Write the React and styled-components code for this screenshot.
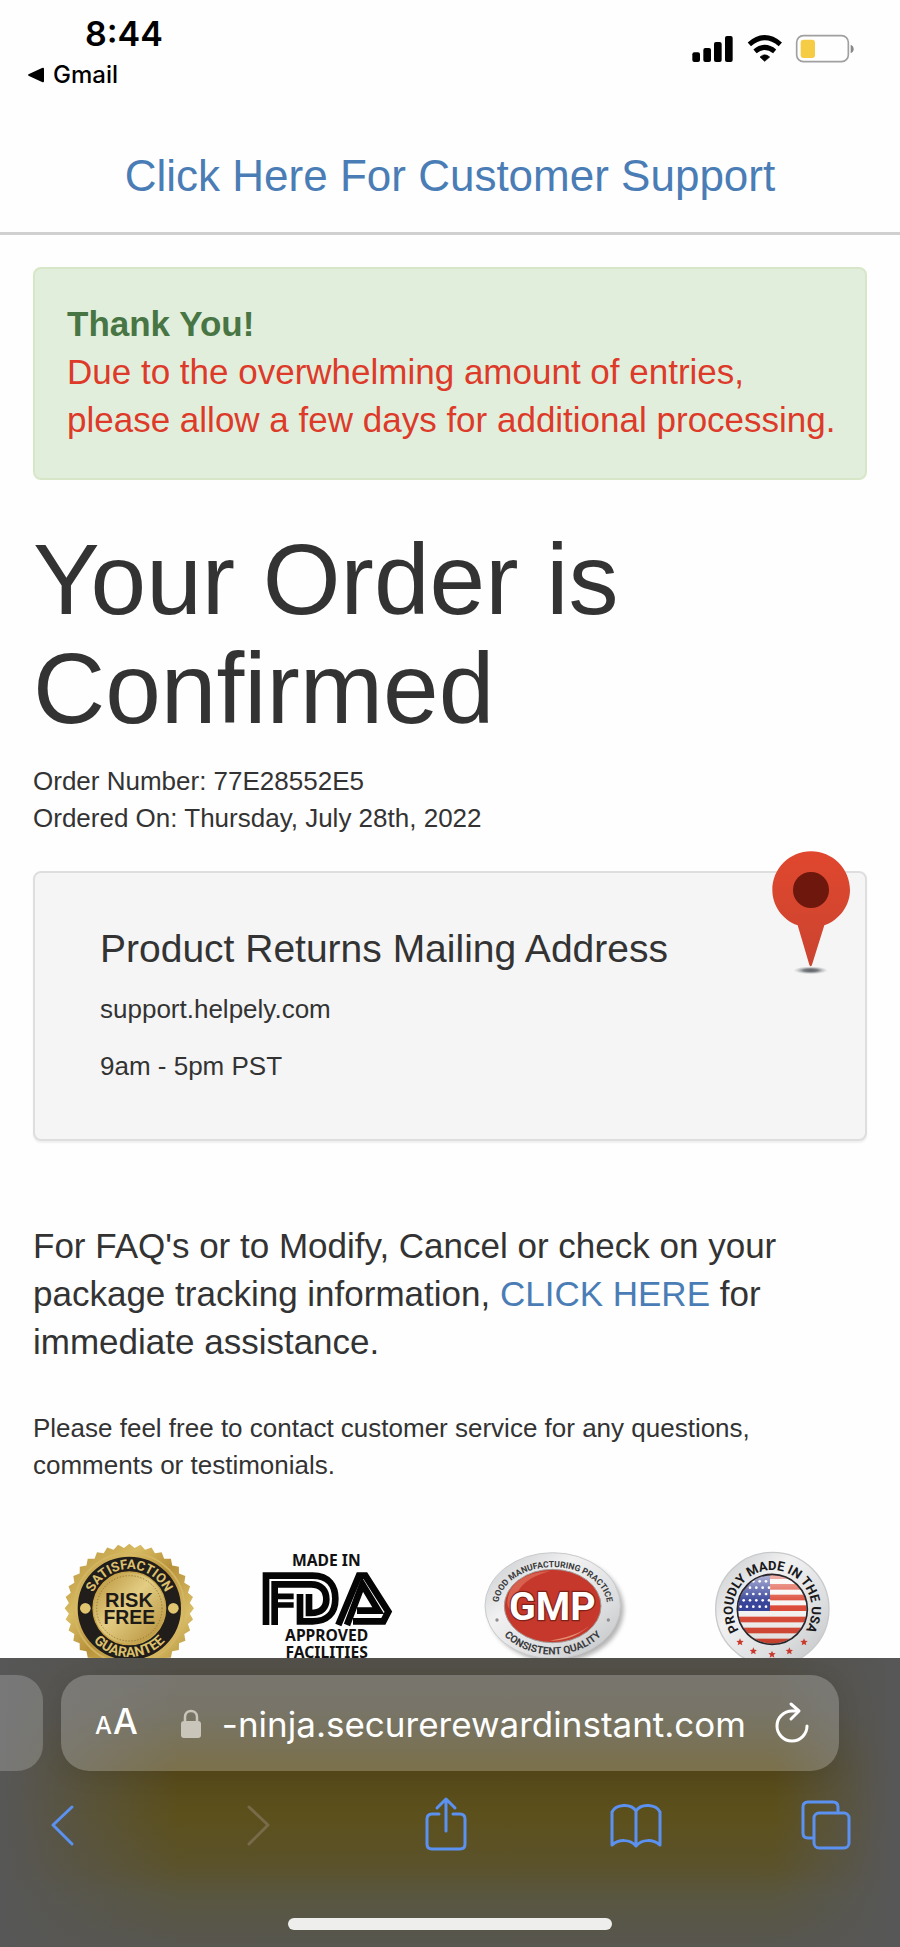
import React from "react";
import styled, { createGlobalStyle } from "styled-components";

const GlobalStyle = createGlobalStyle`
  *, *::before, *::after { box-sizing: border-box; }
  body {
    margin: 0;
    background: #fefefe;
    color: #333;
    font-family: "Liberation Sans", Arial, Helvetica, sans-serif;
    font-size: 26px;
    line-height: 37px;
  }
  h1, h2, p { margin: 0; font-weight: 400; }
  svg { display: block; overflow: visible; }
`;

const system = `Inter, "Helvetica Neue", sans-serif`;

/* ---------- status bar ---------- */

const StatusBar = styled.header`
  display: flex;
  justify-content: space-between;
  align-items: flex-start;
  height: 120px;
  padding: 14px 46px 0 28px;
  color: #000;
  font-family: ${system};
`;

const Clock = styled.time`
  display: block;
  padding-left: 57px;
  font-size: 34px;
  font-weight: 600;
  line-height: 40px;
`;

const BackToApp = styled.a`
  display: flex;
  align-items: center;
  gap: 9px;
  padding-top: 6px;
  color: inherit;
  font-size: 24px;
  font-weight: 500;
  line-height: 30px;
  text-decoration: none;
`;

const StatusIcons = styled.div`
  display: flex;
  gap: 14px;
  padding-top: 21px;
`;

/* ---------- page ---------- */

const SupportBar = styled.nav`
  display: flex;
  justify-content: center;
  height: 115px;
  padding-top: 30px;
  border-bottom: 3px solid #d0d0d0;
  font-size: 44px;
  line-height: 52px;
`;

const Link = styled.a`
  color: #4a7db5;
  text-decoration: none;
`;

const Page = styled.main`
  padding: 32px 33px 289px;
`;

const Alert = styled.section`
  padding: 31px 24px 34px 32px;
  border: 2px solid #d8e6c8;
  border-radius: 8px;
  background: #e1eedb;
  color: #dd3a2a;
  font-size: 35px;
  line-height: 48px;
`;

const AlertTitle = styled.strong`
  display: block;
  color: #487544;
`;

const Title = styled.h1`
  max-width: 700px;
  padding-top: 45px;
  font-size: 100px;
  line-height: 109px;
`;

const OrderFacts = styled.div`
  padding-top: 20px;
`;

const AddressCard = styled.section`
  position: relative;
  display: grid;
  gap: 20px;
  margin-top: 34px;
  padding: 54px 65px;
  border: 2px solid #dedede;
  border-radius: 8px;
  background: #f5f5f5;
  box-shadow: 0 2px 2px rgba(0, 0, 0, 0.06);
`;

const CardTitle = styled.h2`
  font-size: 39px;
  line-height: 44px;
`;

const Pin = styled.svg`
  position: absolute;
  top: -23px;
  right: 14px;
  width: 80px;
  height: 125px;
`;

const Faq = styled.p`
  padding-top: 81px;
  font-size: 35px;
  line-height: 48px;
`;

const Contact = styled.p`
  padding-top: 44px;
`;

const Badges = styled.div`
  display: flex;
  justify-content: space-between;
  padding: 59px 37px 0 31px;
`;

const SvgText = styled.text`
  font-family: ${(p) => p.$family || `Roboto, "Liberation Sans", sans-serif`};
  font-weight: 700;
  text-anchor: middle;
`;

/* ---------- browser controls ---------- */

const BrowserBar = styled.footer`
  position: fixed;
  right: 0;
  bottom: 0;
  left: 0;
  overflow: hidden;
  padding-top: 17px;
  background:
    linear-gradient(to right, #575757 0%, rgba(87, 87, 87, 0) 20%, rgba(87, 87, 87, 0) 86%, #575757 99%),
    linear-gradient(#52504a 0%, #524e3e 18%, #56491a 38%, #5c501c 55%, #5b522b 72%, #59563f 82%, #575650 100%);
`;

const TabStrip = styled.div`
  display: flex;
  gap: 18px;
  padding-right: 61px;
`;

const PreviousTab = styled.button`
  width: 43px;
  height: 96px;
  border: 0;
  border-radius: 0 26px 26px 0;
  background: rgba(255, 255, 255, 0.2);
`;

const AddressField = styled.div`
  display: flex;
  flex: 1;
  align-items: center;
  min-width: 0;
  height: 96px;
  padding: 0 30px 0 34px;
  border-radius: 28px;
  background: rgba(255, 255, 255, 0.22);
  box-shadow: 0 4px 24px rgba(0, 0, 0, 0.08);
  color: #fff;
`;

const IconButton = styled.button`
  display: flex;
  align-items: ${(p) => (p.$baseline ? "baseline" : "center")};
  gap: 1px;
  padding: 0;
  border: 0;
  background: none;
  color: ${(p) => p.$color || "#fff"};
  font-family: ${system};
  font-size: 35px;
  font-weight: 500;
  line-height: 52px;
`;

const SmallA = styled.span`
  font-size: 24px;
`;

const Url = styled.input`
  flex: 1;
  min-width: 0;
  height: 50px;
  margin-left: 16px;
  padding: 2px 0 0 5px;
  border: 0;
  background: none;
  color: #fff;
  font-family: ${system};
  font-size: 35px;
  line-height: 48px;
`;

const Lock = styled.svg`
  width: 20px;
  height: 29px;
  margin-left: 43px;
`;

const Toolbar = styled.nav`
  display: flex;
  justify-content: space-between;
  padding: 24px 50px 65px 38px;
`;

const HomeIndicator = styled.div`
  width: 36%;
  height: 12px;
  margin: 0 auto 17px;
  border-radius: 6px;
  background: #eeeeec;
`;

function ToolIcon({ children }) {
  return (
    <svg width="50" height="58" viewBox="0 0 50 58" fill="none" stroke="currentColor"
      strokeWidth="3" strokeLinecap="round" strokeLinejoin="round" aria-hidden="true">
      {children}
    </svg>
  );
}

/* ---------- badges ---------- */

function toothedEdge(cx, cy, outer, inner, teeth) {
  const points = [];
  for (let i = 0; i < teeth * 2; i += 1) {
    const angle = (Math.PI * i) / teeth;
    const r = i % 2 ? inner : outer;
    points.push(`${(cx + r * Math.cos(angle)).toFixed(1)},${(cy + r * Math.sin(angle)).toFixed(1)}`);
  }
  return points.join(" ");
}

function RiskFreeSeal() {
  return (
    <svg width="130" height="132" viewBox="192 69 390 396">
      <defs>
        <linearGradient id="gold" x1="0" y1="0" x2="1" y2="1">
          <stop offset="0" stopColor="#b18c35" />
          <stop offset="0.3" stopColor="#d8bb62" />
          <stop offset="0.5" stopColor="#b8923b" />
          <stop offset="0.75" stopColor="#d9bd66" />
          <stop offset="1" stopColor="#a57f2b" />
        </linearGradient>
        <linearGradient id="goldCore" x1="0" y1="0" x2="1" y2="1">
          <stop offset="0" stopColor="#b48d35" />
          <stop offset="0.45" stopColor="#e3cd83" />
          <stop offset="1" stopColor="#b08933" />
        </linearGradient>
        <path id="sealTop" d="M270 265 A118 118 0 0 1 506 265" />
        <path id="sealBottom" d="M242 265 A146 146 0 0 0 534 265" />
      </defs>
      <polygon points={toothedEdge(388, 265, 194, 182, 36)} fill="url(#gold)" />
      <circle cx="388" cy="265" r="166" fill="none" stroke="#d3b664" strokeWidth="5" />
      <circle cx="388" cy="265" r="132" fill="none" stroke="#211d1b" strokeWidth="46" />
      <circle cx="388" cy="265" r="109" fill="url(#goldCore)" stroke="#c7a44a" strokeWidth="4" />
      <circle cx="388" cy="265" r="98" fill="none" stroke="#8d6c25" strokeWidth="3" strokeDasharray="3 6" />
      <circle cx="256" cy="265" r="16" fill="#e0c470" />
      <circle cx="520" cy="265" r="16" fill="#e0c470" />
      <SvgText fontSize="40" fill="#dcc06c">
        <textPath href="#sealTop" startOffset="50%">SATISFACTION</textPath>
      </SvgText>
      <SvgText fontSize="42" fill="#dcc06c">
        <textPath href="#sealBottom" startOffset="50%">GUARANTEE</textPath>
      </SvgText>
      <SvgText $family={`"Liberation Sans", sans-serif`} x="387" y="261" fontSize="60" fill="#1d1a18">RISK</SvgText>
      <SvgText $family={`"Liberation Sans", sans-serif`} x="388" y="312" fontSize="58" fill="#1d1a18">FREE</SvgText>
    </svg>
  );
}

function FdaBadge() {
  return (
    <svg width="155" height="132" viewBox="783 69 465 396">
      <SvgText $family={`"Noto Sans", sans-serif`} x="976" y="139" fontSize="47" fill="#111">MADE IN</SvgText>
      <g fill="none" stroke="#050505" strokeWidth="20" strokeLinejoin="miter" aria-label="FDA" role="img">
        <path d="M795 315 V167 H935 C985 167 1003 200 1003 236 C1003 280 978 304 935 304 H897 V222" />
        <path d="M821 315 V193 H930 C961 193 976 212 976 238 C976 264 961 279 930 279 H924 V222" />
        <path d="M821 229 H878 M821 255 H878" strokeWidth="17" />
        <path d="M1012 315 L1074 167 H1093 L1162 275 L1147 304 H1056" />
        <path d="M1038 315 L1084 193 L1132 272 H1068" />
      </g>
      <SvgText $family={`"Noto Sans", sans-serif`} x="977" y="362" fontSize="47" fill="#111">APPROVED</SvgText>
      <SvgText $family={`"Noto Sans", sans-serif`} x="977" y="413" fontSize="47" fill="#111">FACILITIES</SvgText>
    </svg>
  );
}

function GmpBadge() {
  return (
    <svg width="162" height="132" viewBox="102 69 486 396">
      <defs>
        <linearGradient id="silver" x1="0" y1="0" x2="1" y2="1">
          <stop offset="0" stopColor="#c4c6c8" />
          <stop offset="0.35" stopColor="#f1f1f2" />
          <stop offset="0.7" stopColor="#dcdddf" />
          <stop offset="1" stopColor="#bfc1c3" />
        </linearGradient>
        <filter id="softShadow" x="-20%" y="-20%" width="140%" height="140%">
          <feGaussianBlur stdDeviation="7" />
        </filter>
        <path id="gmpTopArc" d="M150 286 A163 116 0 1 1 466 286" />
        <path id="gmpBottomArc" d="M134 305 A184 146 0 0 0 482 305" />
      </defs>
      <ellipse cx="318" cy="268" rx="203" ry="158" fill="#777" opacity="0.55" filter="url(#softShadow)" />
      <ellipse cx="308" cy="257" rx="203" ry="159" fill="url(#silver)" stroke="#c9cacc" strokeWidth="3" />
      <ellipse cx="308" cy="258" rx="145" ry="110" fill="#c5382b" stroke="#a39b98" strokeWidth="3" />
      <path d="M172 250 C172 190 230 156 300 154 C230 172 192 205 190 270 C184 275 174 268 172 250" fill="#e57b68" opacity="0.6" />
      <path d="M300 362 C370 364 430 320 443 280 C425 330 370 350 300 362" fill="#efb08e" opacity="0.7" />
      <SvgText fontSize="26" fill="#3b3b3d">
        <textPath href="#gmpTopArc" startOffset="50%">GOOD MANUFACTURING PRACTICE</textPath>
      </SvgText>
      <SvgText fontSize="31" fill="#3b3b3d">
        <textPath href="#gmpBottomArc" startOffset="50%">CONSISTENT QUALITY</textPath>
      </SvgText>
      <circle cx="141" cy="300" r="5" fill="#8c8c8e" />
      <circle cx="475" cy="300" r="5" fill="#8c8c8e" />
      <SvgText x="307" y="301" fontSize="118" fill="#fff" stroke="#7d2119" strokeWidth="7" paintOrder="stroke">GMP</SvgText>
    </svg>
  );
}

function UsaBadge() {
  const stars = [];
  for (let row = 0; row < 5; row += 1) {
    for (let col = 0; col < 5; col += 1) {
      stars.push(
        <circle key={`${row}-${col}`} cx={872 + col * 19 + (row % 2) * 9} cy={184 + row * 19} r="4" fill="#fff" />
      );
    }
  }
  const star = "0,-11 3,-4 11,-3 5,2 7,10 0,6 -7,10 -5,2 -11,-3 -3,-4";
  const ringStars = [[870, 366], [910, 393], [966, 403], [1018, 393], [1062, 366]];
  return (
    <svg width="116" height="132" viewBox="792 69 348 396">
      <defs>
        <clipPath id="flagClip"><circle cx="967" cy="268" r="103" /></clipPath>
        <linearGradient id="flagGloss" x1="0" y1="0" x2="0" y2="1">
          <stop offset="0" stopColor="#fff" stopOpacity="0.65" />
          <stop offset="0.4" stopColor="#fff" stopOpacity="0.05" />
          <stop offset="1" stopColor="#000" stopOpacity="0.12" />
        </linearGradient>
        <path id="usaArc" d="M883 351 A118 118 0 1 1 1051 351" />
      </defs>
      <circle cx="967" cy="267" r="170" fill="url(#silver)" stroke="#c8c9cb" strokeWidth="4" />
      <g clipPath="url(#flagClip)">
        <rect x="860" y="160" width="214" height="216" fill="#f7f5f3" />
        {[160, 192, 224, 256, 290, 323, 356].map((y) => (
          <rect key={y} x="860" y={y} width="214" height="17" fill="#db4430" />
        ))}
        <rect x="860" y="160" width="100" height="113" fill="#2d3a94" />
        {stars}
        <rect x="860" y="160" width="214" height="216" fill="url(#flagGloss)" />
      </g>
      <circle cx="967" cy="268" r="105" fill="none" stroke="#26262b" strokeWidth="5" />
      <SvgText fontSize="39" fill="#18181a">
        <textPath href="#usaArc" startOffset="50%">PROUDLY MADE IN THE USA</textPath>
      </SvgText>
      {ringStars.map(([x, y]) => (
        <polygon key={x} points={star} transform={`translate(${x} ${y})`} fill="#c93a2e" />
      ))}
    </svg>
  );
}

export default function App() {
  return (
    <>
      <GlobalStyle />
      <StatusBar>
        <div>
          <Clock>8:44</Clock>
          <BackToApp href="#gmail">
            <svg width="16" height="16" viewBox="0 0 16 16" aria-hidden="true">
              <path d="M1 7 L14 1 Q16 0 16 2 V14 Q16 16 14 15 L1 9 Q-1 8 1 7" />
            </svg>
            Gmail
          </BackToApp>
        </div>
        <StatusIcons aria-hidden="true">
          <svg width="41" height="28" viewBox="729 105 123 84">
            <rect x="730" y="157" width="23" height="29" rx="6" />
            <rect x="763" y="144" width="23" height="42" rx="6" />
            <rect x="795" y="126" width="23" height="60" rx="6" />
            <rect x="828" y="108" width="23" height="78" rx="6" />
          </svg>
          <svg width="35" height="28" viewBox="891 105 105 84">
            <path d="M944 184 L930 171 Q944 158 959 171 Z" stroke="#000" strokeWidth="2" strokeLinejoin="round" />
            <g fill="none" stroke="#000" strokeWidth="15">
              <path d="M898 133 Q944 93 991 133" />
              <path d="M915 154 Q944 130 974 154" />
            </g>
          </svg>
          <svg width="58" height="28" viewBox="1038 105 174 84">
            <rect x="1040" y="107" width="155" height="78" rx="20" fill="none" stroke="#a0a0a0" strokeWidth="5" />
            <rect x="1052" y="119" width="43" height="55" rx="9" fill="#f6cc44" />
            <path d="M1202 134 Q1211 138 1211 147 Q1211 156 1202 160 Z" fill="#888" />
          </svg>
        </StatusIcons>
      </StatusBar>

      <SupportBar>
        <Link href="#support">Click Here For Customer Support</Link>
      </SupportBar>

      <Page>
        <Alert role="status">
          <AlertTitle>Thank You!</AlertTitle>
          Due to the overwhelming amount of entries, please allow a few days for additional processing.
        </Alert>

        <Title>Your Order is Confirmed</Title>
        <OrderFacts>
          <p>Order Number: 77E28552E5</p>
          <p>Ordered On: Thursday, July 28th, 2022</p>
        </OrderFacts>

        <AddressCard>
          <CardTitle>Product Returns Mailing Address</CardTitle>
          <p>support.helpely.com</p>
          <p>9am - 5pm PST</p>
          <Pin viewBox="212 92 240 375" aria-hidden="true">
            <defs>
              <radialGradient id="pinShadow">
                <stop offset="0" stopColor="#5e6266" />
                <stop offset="0.4" stopColor="#7a7e82" />
                <stop offset="1" stopColor="#b8bbbd" stopOpacity="0" />
              </radialGradient>
              <linearGradient id="pinRed" x1="0" y1="0" x2="0" y2="1">
                <stop offset="0" stopColor="#e0472e" />
                <stop offset="1" stopColor="#cb4430" />
              </linearGradient>
            </defs>
            <ellipse cx="331" cy="453" rx="52" ry="12" fill="url(#pinShadow)" />
            <path d="M332 96 C396 96 449 148 449 212 C449 258 418 302 372 318 L335 436 Q331 446 327 436 L292 318 C246 302 216 258 216 212 C216 148 268 96 332 96 Z" fill="url(#pinRed)" />
            <circle cx="332" cy="212" r="54" fill="#6d170d" />
          </Pin>
        </AddressCard>

        <Faq>
          For FAQ's or to Modify, Cancel or check on your package tracking information,{" "}
          <Link href="#faq">CLICK HERE</Link> for immediate assistance.
        </Faq>
        <Contact>
          Please feel free to contact customer service for any questions, comments or testimonials.
        </Contact>

        <Badges>
          <RiskFreeSeal />
          <FdaBadge />
          <GmpBadge />
          <UsaBadge />
        </Badges>
      </Page>

      <BrowserBar>
        <TabStrip>
          <PreviousTab aria-label="Previous tab" />
          <AddressField>
            <IconButton $baseline aria-label="Page settings">
              <SmallA>A</SmallA>
              <span>A</span>
            </IconButton>
            <Lock viewBox="0 0 20 29" aria-hidden="true">
              <path d="M4 14 V8 C4 0 16 0 16 8 V14" fill="none" stroke="#c9c5bb" strokeWidth="2.5" />
              <rect x="0" y="12" width="20" height="17" rx="3" fill="#c9c5bb" />
            </Lock>
            <Url aria-label="Address" readOnly value="-ninja.securerewardinstant.com" />
            <IconButton aria-label="Reload">
              <svg width="34" height="42" viewBox="0 0 34 42" fill="none" stroke="currentColor" strokeWidth="3" strokeLinecap="round" strokeLinejoin="round">
                <path d="M32 24 A15 15 0 1 1 17 9 H23" />
                <path d="M16 2 L24 9 L16 17" />
              </svg>
            </IconButton>
          </AddressField>
        </TabStrip>
        <Toolbar aria-label="Browser">
          <IconButton $color="#5b92f2" aria-label="Back">
            <ToolIcon><path d="M34 12 L15 30 L34 49" /></ToolIcon>
          </IconButton>
          <IconButton $color="#776b49" aria-label="Forward" disabled>
            <ToolIcon><path d="M20 12 L39 30 L20 49" /></ToolIcon>
          </IconButton>
          <IconButton $color="#5b92f2" aria-label="Share">
            <ToolIcon>
              <path d="M20 19 H13 Q8 19 8 24 V49 Q8 54 13 54 H41 Q46 54 46 49 V24 Q46 19 41 19 H34" />
              <path d="M27 36 V5 M18 13 L27 4 L36 13" />
            </ToolIcon>
          </IconButton>
          <IconButton $color="#5b92f2" aria-label="Bookmarks">
            <ToolIcon>
              <path d="M26 51 C20 44 9 44 2 50 V17 C6 9 21 8 26 16 C31 8 46 9 50 17 V50 C43 44 32 44 26 51 V16" />
            </ToolIcon>
          </IconButton>
          <IconButton $color="#5b92f2" aria-label="Tabs">
            <ToolIcon>
              <path d="M12 43 H8 Q3 43 3 38 V12 Q3 7 8 7 H33 Q38 7 38 12 V16" />
              <rect x="14" y="18" width="35" height="35" rx="5" />
            </ToolIcon>
          </IconButton>
        </Toolbar>
        <HomeIndicator />
      </BrowserBar>
    </>
  );
}
